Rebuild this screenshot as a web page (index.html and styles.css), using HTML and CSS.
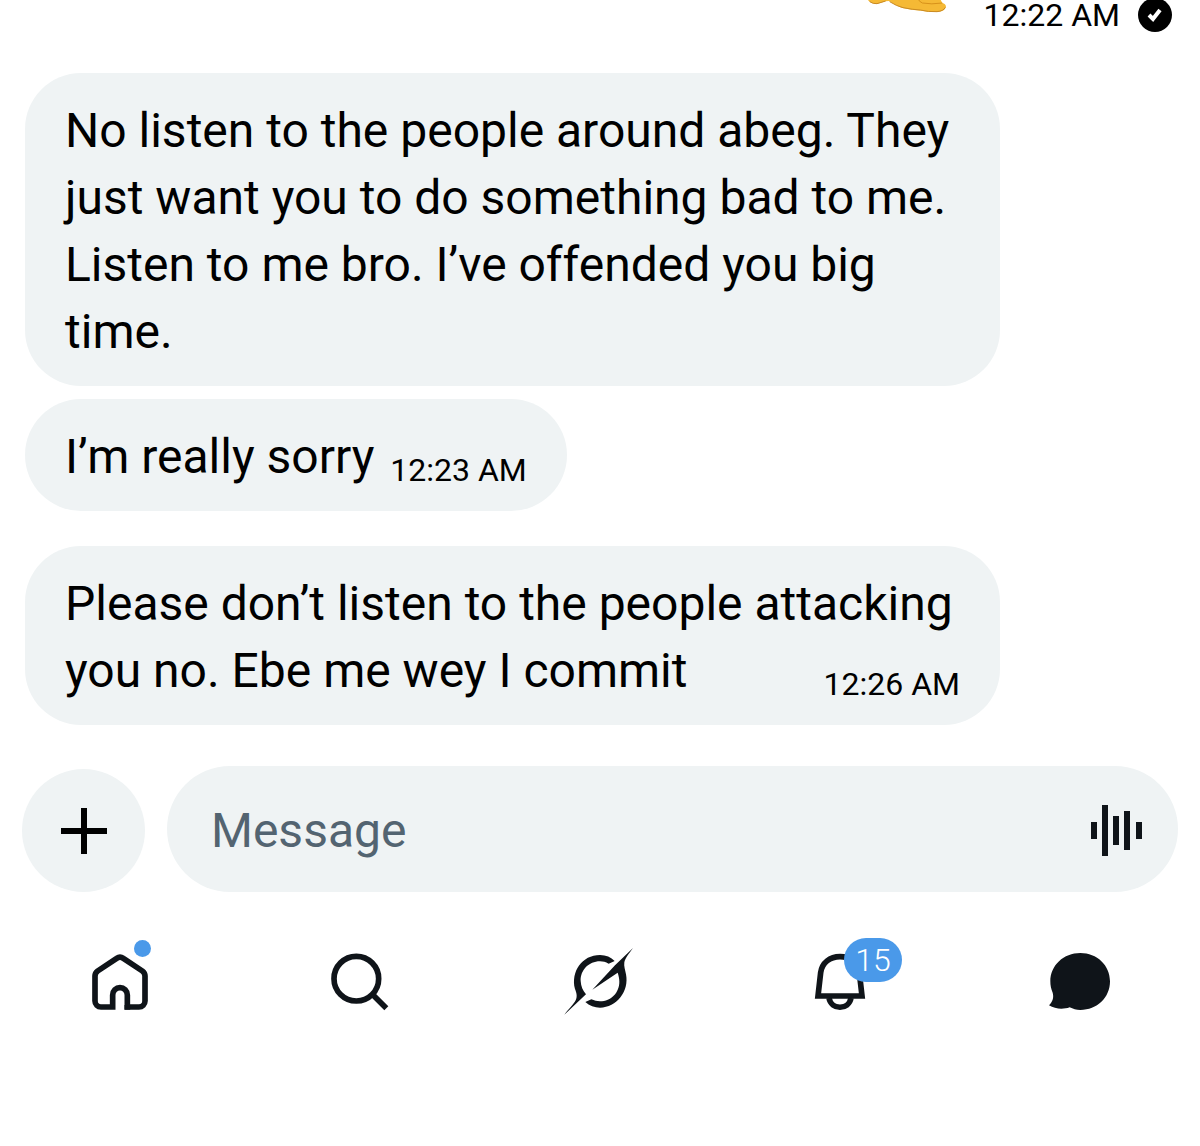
FILE: index.html
```html
<!DOCTYPE html>
<html lang="en">
<head>
    <meta charset="UTF-8">
    <meta name="viewport" content="width=device-width, initial-scale=1">
    <title>Messages</title>
    <link rel="stylesheet" href="styles.css">
</head>
<body>
    <main class="chat">
        <div class="sent">
            <svg class="hands" viewBox="55 -6 240 45" aria-hidden="true">
                <path d="M50 -6 L58 4 Q68 13 82 12 L108 4 L118 3 Q138 17 155 23 Q185 30 215 32 Q235 37 262 36 Q286 34 289 20 Q288 11 278 9 L270 -6 Z" fill="#f5b935"/>
                <path d="M60 5 Q70 12 82 11 L108 3 M120 5 Q140 18 160 23 Q190 29 212 30 Q235 36 262 35 Q282 33 287 22" fill="none" stroke="#c98a24" stroke-width="3"/>
                <path d="M205 -6 Q207 5 218 9 Q245 14 278 9" fill="none" stroke="#d8921a" stroke-width="3"/>
            </svg>
            <time class="time">12:22 AM</time>
            <svg class="seen" viewBox="0 0 34 34" aria-hidden="true">
                <circle cx="17" cy="17" r="17"/>
                <path d="M11 17 L15 21 L22 12" fill="none" stroke="#fff" stroke-width="4"/>
            </svg>
        </div>

        <div class="bubble bubble-long">
            <p>No listen to the people around abeg. They<br>just want you to do something bad to me.<br>Listen to me bro. I’ve offended you big<br>time.</p>
        </div>
        <div class="bubble">
            <p>I’m really sorry</p>
            <time class="time">12:23 AM</time>
        </div>
        <div class="bubble bubble-last">
            <p>Please don’t listen to the people attacking<br>you no. Ebe me wey I commit</p>
            <time class="time">12:26 AM</time>
        </div>
    </main>

    <form class="composer">
        <button type="button" class="add" aria-label="Add attachment">
            <svg viewBox="0 0 46 46"><path d="M0 23 H46 M23 0 V46" stroke="#000" stroke-width="6"/></svg>
        </button>
        <div class="field">
            <input type="text" placeholder="Message" aria-label="Message">
            <button type="button" class="voice" aria-label="Record voice message">
                <svg viewBox="0 0 51 51" fill="#0f1419">
                    <rect x="0" y="17" width="6" height="17"/>
                    <rect x="11" y="0" width="6" height="51"/>
                    <rect x="22" y="11" width="6" height="29"/>
                    <rect x="33" y="6" width="6" height="39"/>
                    <rect x="45" y="17" width="6" height="17"/>
                </svg>
            </button>
        </div>
    </form>

    <nav class="tabs">
        <a href="#home" class="tab" aria-label="Home">
            <svg viewBox="42 78 216 216" fill="none" stroke="#0f1419" stroke-width="17">
                <path d="M128 261 H93 A18 18 0 0 1 75 243 V168 Q75 159 83 153 L140 115 Q150 108 160 115 L217 153 Q225 159 225 168 V243 A18 18 0 0 1 207 261 H172 V225 A22 22 0 0 0 128 225 V269"/>
                <path d="M172 255 V269"/>
            </svg>
            <span class="dot"></span>
        </a>
        <a href="#search" class="tab" aria-label="Search">
            <svg viewBox="42 48 216 216" fill="none" stroke="#0f1419" stroke-width="17">
                <circle cx="139" cy="146" r="67"/>
                <path d="M187 193 L229 235"/>
            </svg>
        </a>
        <a href="#grok" class="tab" aria-label="Grok">
            <svg viewBox="42 48 216 216" fill="#0f1419">
                <path d="M194 93 L176 101 C167 96 159 94 150 94 C116 94 91 121 92 153 C93 170 98 180 108 193 L43 254 C56 236 70 225 77 211 C83 198 79 188 75 177 C62 125 96 75 150 75 C168 75 183 81 194 93 Z"/>
                <path d="M106 216 L124 208 C133 212 141 214 150 214 C184 214 208 187 208 155 C208 145 206 137 203 128 L127 179 L195 106 L249 54 C237 71 226 83 223 97 C221 109 226 121 228 133 C238 184 200 233 150 233 C134 233 118 227 106 216 Z"/>
            </svg>
        </a>
        <a href="#notifications" class="tab" aria-label="Notifications, 15 new">
            <svg viewBox="12 78 216 216" fill="none" stroke="#0f1419" stroke-width="17">
                <path d="M54 228 L62 158 C66 128 90 110 120 110 C150 110 174 128 178 158 L186 228 Z"/>
                <path d="M87 234 C94 271 146 271 153 234"/>
            </svg>
            <span class="badge">15</span>
        </a>
        <a href="#messages" class="tab" aria-label="Messages">
            <svg viewBox="42 48 216 216" fill="#0f1419">
                <path d="M151 69 C201 69 240 106 240 154 C240 203 201 240 151 240 C139 240 129 237 119 232 C100 239 76 238 57 226 C68 214 72 203 68 188 C63 177 61 166 61 154 C61 106 101 69 151 69 Z"/>
            </svg>
        </a>
    </nav>
</body>
</html>
```

FILE: styles.css
```css
* {
    box-sizing: border-box;
}

body {
    margin: 0;
    background-color: #fff;
    color: #000;
    font-family: Roboto, "Liberation Sans", Arial, sans-serif;
    font-size: 48px;
    line-height: 67px;
}

p {
    margin: 0;
}

svg {
    display: block;
}

button {
    padding: 0;
    border: none;
    cursor: pointer;
}

/* Conversation */
.chat {
    display: flex;
    flex-direction: column;
    align-items: flex-start;
    padding: 0 28px 0 25px;
}

.time {
    font-size: 32px;
    line-height: 40px;
    white-space: nowrap;
}

/* the last sent message is scrolled partly out of view */
.sent {
    display: flex;
    align-self: flex-end;
    align-items: center;
    height: 34px;
    margin-top: -2px;
    margin-bottom: 41px;
}

.sent .time {
    line-height: 30px;
}

.hands {
    align-self: flex-start;
    width: 80px;
    height: 15px;
    margin-right: 36px;
}

.seen {
    width: 34px;
    height: 34px;
    margin-left: 18px;
}

.bubble {
    display: flex;
    justify-content: space-between;
    align-items: flex-end;
    gap: 16px;
    margin-bottom: 13px;
    padding: 24px 40px 21px;
    border-radius: 56px;
    background-color: #eff3f4;
}

.bubble p {
    white-space: nowrap;
}

.bubble-long {
    width: 85%;
}

.bubble-last {
    width: 85%;
    gap: 0;
    margin-top: 22px;
    margin-bottom: 0;
}

/* the time shares the short last line */
.bubble-last .time {
    margin-left: -140px;
}

/* Message box */
.composer {
    display: flex;
    align-items: flex-end;
    gap: 22px;
    margin: 41px 22px 54px;
}

.add {
    display: flex;
    flex: none;
    justify-content: center;
    align-items: center;
    width: 123px;
    height: 123px;
    border-radius: 50%;
    background-color: #eff3f4;
}

.add svg {
    width: 46px;
    height: 46px;
}

.field {
    display: flex;
    flex: 1;
    align-items: center;
    height: 126px;
    padding: 2px 36px 0 44px;
    border-radius: 63px;
    background-color: #eff3f4;
}

.field input {
    flex: 1;
    min-width: 0;
    padding: 0;
    border: none;
    outline: none;
    background: none;
    color: #000;
    font: inherit;
}

.field input::placeholder {
    color: #536471;
    opacity: 1;
}

.voice {
    background: none;
}

.voice svg {
    width: 51px;
    height: 51px;
}

/* Bottom tabs */
.tabs {
    display: grid;
    grid-template-columns: repeat(5, 1fr);
    justify-items: center;
}

.tab {
    position: relative;
    text-decoration: none;
}

.tab svg {
    width: 72px;
    height: 72px;
}

.dot {
    position: absolute;
    top: -6px;
    left: 50px;
    width: 17px;
    height: 17px;
    border-radius: 50%;
    background-color: #4a99e9;
}

.badge {
    position: absolute;
    top: -8px;
    left: 40px;
    width: 58px;
    height: 44px;
    border-radius: 22px;
    background-color: #4a99e9;
    color: #fff;
    font-size: 32px;
    font-weight: 300;
    line-height: 44px;
    text-align: center;
}
```
